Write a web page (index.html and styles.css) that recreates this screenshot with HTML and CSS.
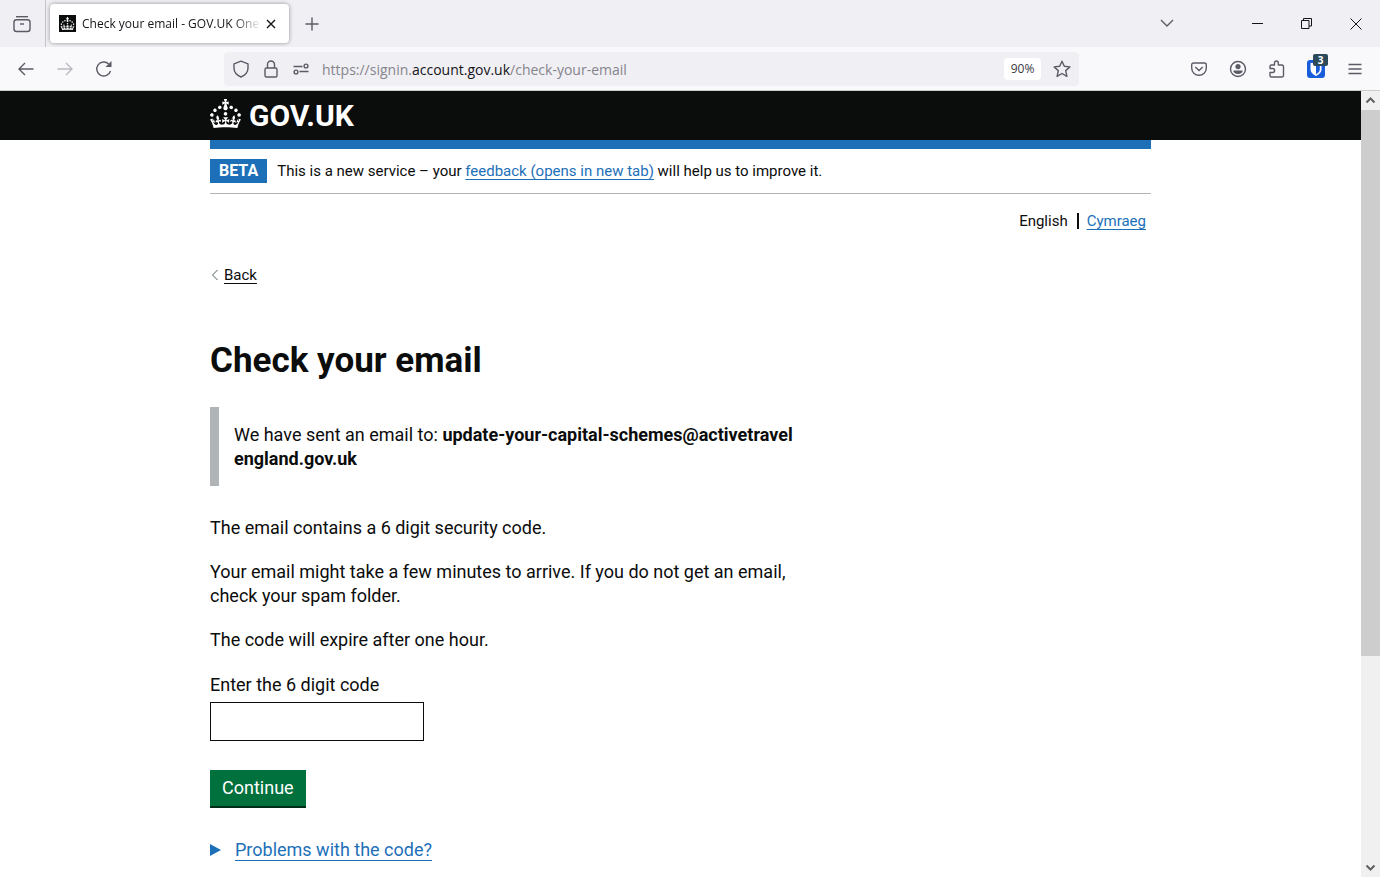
FILE: index.html
```html
<!DOCTYPE html>
<html lang="en">
<head>
<meta charset="utf-8">
<title>Check your email - GOV.UK One Login</title>
<link rel="stylesheet" href="styles.css">
</head>
<body>
<svg class="defs" aria-hidden="true">
  <symbol id="crown" viewBox="0 0 32 30"><path fill="#fff" d="M22.6 10.4c-1 .4-2-.1-2.4-1-.4-.9.1-2 1-2.4.9-.4 2 .1 2.4 1s-.1 2-1 2.4m-5.9 6.7c-.9.4-2-.1-2.4-1-.4-.9.1-2 1-2.4.9-.4 2 .1 2.4 1s-.1 2-1 2.4m10.8-3.7c-1 .4-2-.1-2.4-1-.4-.9.1-2 1-2.4.9-.4 2 .1 2.4 1s0 2-1 2.4m3.3 4.8c-1 .4-2-.1-2.4-1-.4-.9.1-2 1-2.4.9-.4 2 .1 2.4 1s-.1 2-1 2.4M17 4.7l2.3 1.2V2.5l-2.3.7-.2-.2.9-3h-3.4l.9 3-.2.2c-.1.1-2.3-.7-2.3-.7v3.4L15 4.7c.1.1.1.2.2.2l-1.3 4c-.1.2-.1.4-.1.6 0 1.1.8 2 1.9 2.2h.7c1-.2 1.9-1.1 1.9-2.1 0-.2 0-.4-.1-.6l-1.3-4c-.1-.2 0-.2.1-.3m-7.6 5.7c.9.4 2-.1 2.4-1 .4-.9-.1-2-1-2.4-.9-.4-2 .1-2.4 1s0 2 1 2.4m-5 3c.9.4 2-.1 2.4-1 .4-.9-.1-2-1-2.4-.9-.4-2 .1-2.4 1s.1 2 1 2.4m-3.2 4.8c.9.4 2-.1 2.4-1 .4-.9-.1-2-1-2.4-.9-.4-2 .1-2.4 1s0 2 1 2.4m14.8 11c4.4 0 8.6.3 12.3.8 1.1-4.5 2.4-7 3.7-8.8l-2.5-.9c.2 1.3.3 1.9 0 2.7-.4-.4-.8-1.1-1.1-2.3l-1.2 4c.7-.5 1.3-.8 2-.9-1.1 2.5-2.6 3.1-3.5 3-1.1-.2-1.7-1.2-1.5-2.1.3-1.2 1.5-1.5 2.1-.1 1.1-2.3-.8-3-2-2.3 1.9-1.9 2.1-3.5.6-5.6-2.1 1.6-2.1 3.2-1.2 5.5-1.2-1.4-3.2-.6-2.5 1.6.9-1.4 2.1-.5 1.9.8-.2 1.1-1.7 2.1-3.5 1.9-2.7-.2-2.9-2.1-2.9-3.6.7-.1 1.9.5 2.9 1.9l.4-4.3c-1.1 1.1-2.1 1.4-3.2 1.4.4-1.2 2.1-3 2.1-3h-5.4s1.7 1.9 2.1 3c-1.1 0-2.1-.2-3.2-1.4l.4 4.3c1-1.4 2.2-2 2.9-1.9-.1 1.5-.2 3.4-2.9 3.6-1.9.2-3.4-.8-3.5-1.9-.2-1.3 1-2.2 1.9-.8.7-2.3-1.2-3-2.5-1.6.9-2.2.9-3.9-1.2-5.5-1.5 2-1.3 3.7.6 5.6-1.2-.7-3.1 0-2 2.3.6-1.4 1.8-1.1 2.1.1.2.9-.3 1.9-1.5 2.1-.9.2-2.4-.5-3.5-3 .6 0 1.2.3 2 .9l-1.2-4c-.3 1.1-.7 1.9-1.1 2.3-.3-.8-.2-1.4 0-2.7l-2.9.9C1.3 23 2.6 25.5 3.7 30c3.7-.5 7.9-.8 12.3-.8"/></symbol>
</svg>

<div class="tabstrip">
  <button class="icon-btn history" aria-label="Recent browsing">
    <svg width="20" height="20" viewBox="0 0 20 20"><path d="M4 2.700h12"/><rect x="2" y="5.700" width="16" height="11.800" rx="2.500"/><path d="M8 10h4"/></svg>
  </button>
  <div class="tab">
    <svg class="favicon" width="17" height="17" viewBox="0 0 17 17"><rect width="17" height="17" fill="#0b0c0c"/><use href="#crown" x="1" y="2" width="15" height="13"/></svg>
    <span class="tab-title">Check your email - GOV.UK One</span>
    <button class="icon-btn close" aria-label="Close tab"><svg width="10" height="10" viewBox="0 0 10 10"><path d="M1 1l8 8M9 1l-8 8"/></svg></button>
  </div>
  <button class="icon-btn new-tab" aria-label="New tab"><svg width="14" height="14" viewBox="0 0 14 14"><path d="M7 .5v13M.5 7h13"/></svg></button>
  <div class="window-controls">
    <button class="icon-btn tabs-list" aria-label="List all tabs"><svg width="14" height="8" viewBox="0 0 14 8"><path d="M1 1l6 6 6-6"/></svg></button>
    <button class="icon-btn win" aria-label="Minimise"><svg width="11" height="11" viewBox="0 0 11 11"><path d="M0 5.500h11"/></svg></button>
    <button class="icon-btn win" aria-label="Restore"><svg width="11" height="11" viewBox="0 0 11 11"><path d="M.5 2.500h7.500v8H.5zM2.500 2.500V.5h8V8H8"/></svg></button>
    <button class="icon-btn win" aria-label="Close window"><svg width="12" height="12" viewBox="0 0 12 12"><path d="M.5.5l11 11M11.500.5l-11 11"/></svg></button>
  </div>
</div>

<div class="toolbar">
  <div class="nav">
    <button class="icon-btn" aria-label="Back"><svg width="16" height="14" viewBox="0 0 16 14"><path d="M15.500 7H1M7 1L1 7l6 6"/></svg></button>
    <button class="icon-btn" aria-label="Forward" disabled><svg width="16" height="14" viewBox="0 0 16 14"><path d="M.5 7H15M9 1l6 6-6 6"/></svg></button>
    <button class="icon-btn" aria-label="Reload"><svg width="18" height="18" viewBox="0 0 18 18"><path d="M15.500 11A7 7 0 1 1 13.700 4"/><path class="solid" d="M16.500 1v6h-6z"/></svg></button>
  </div>
  <div class="urlbar">
    <svg width="18" height="18" viewBox="0 0 18 18"><path d="M9 1.200l7 2.600v4.200c0 4-3 7.300-7 9-4-1.700-7-5-7-9V3.800z" stroke-linejoin="round"/></svg>
    <svg width="18" height="18" viewBox="0 0 18 18"><rect x="3" y="8" width="12" height="9" rx="1.500"/><path d="M5.500 8V4.500a3.500 3.500 0 0 1 7 0V8"/></svg>
    <svg width="18" height="18" viewBox="0 0 18 18"><path d="M1.500 6.500h9M7.500 11.500h9"/><circle cx="14" cy="6" r="1.900"/><circle cx="4" cy="12" r="1.900"/></svg>
    <span class="url">https://signin.<span class="domain">account.gov.uk</span>/check-your-email</span>
    <button class="zoom">90%</button>
    <button class="icon-btn star" aria-label="Bookmark this page"><svg width="18" height="18" viewBox="0 0 18 18"><path d="M9 1.200l2.300 5.100 5.600.6-4.200 3.700 1.200 5.800L9 13.500l-4.900 2.900 1.200-5.800L1.100 6.900l5.600-.6z" stroke-linejoin="round"/></svg></button>
  </div>
  <div class="tools">
    <button class="icon-btn" aria-label="Save to Pocket"><svg width="18" height="18" viewBox="0 0 18 18"><path d="M3.500 3h11a1.800 1.800 0 0 1 1.800 1.800V8a7.300 7.300 0 0 1-14.600 0V4.800A1.800 1.800 0 0 1 3.500 3z"/><path d="M5.300 7L9 10.500 12.700 7"/></svg></button>
    <button class="icon-btn" aria-label="Account"><svg width="18" height="18" viewBox="0 0 18 18"><circle cx="9" cy="9" r="7.500"/><circle class="solid" cx="9" cy="6.600" r="2.600"/><path class="solid" d="M4.300 10.500h9.400c0 2-2 3.500-4.700 3.500s-4.700-1.500-4.700-3.500z"/></svg></button>
    <button class="icon-btn" aria-label="Extensions"><svg width="18" height="18" viewBox="0 0 18 18"><path stroke-linejoin="round" d="M2 8V6.500A1.500 1.500 0 0 1 3.500 5H6.500V2.900a1.900 1.900 0 0 1 3.800 0V5h3.700A1.500 1.500 0 0 1 15.500 6.500v9a1.500 1.500 0 0 1-1.500 1.500H3.500A1.500 1.500 0 0 1 2 15.500V12.500h2.600a2 2 0 0 0 0-4H2z"/></svg></button>
    <button class="icon-btn vault" aria-label="Password manager"><svg width="18" height="18" viewBox="0 0 18 18"><rect width="18" height="18" rx="3" fill="#175ddc" stroke="none"/><path d="M3.500 3h11v6.500c0 3-2.500 5-5.500 6.500-3-1.500-5.500-3.500-5.500-6.500z" fill="#fff" stroke="none"/><path d="M9 4.500h3.800v5c0 2-1.700 3.500-3.800 4.700z" fill="#175ddc" stroke="none"/></svg><span class="badge">3</span></button>
    <button class="icon-btn" aria-label="Menu"><svg width="18" height="18" viewBox="0 0 18 18"><path d="M2.500 4.500h13M2.500 9h13M2.500 13.500h13"/></svg></button>
  </div>
</div>

<div class="viewport">
  <div class="page">
    <header class="header">
      <div class="container">
        <a class="logo" href="#"><svg width="31" height="29" aria-hidden="true"><use href="#crown"/></svg><span>GOV.UK</span></a>
      </div>
    </header>
    <div class="container">
      <div class="phase">
        <strong class="tag">BETA</strong>
        <span>This is a new service – your <a href="#">feedback (opens in new tab)</a> will help us to improve it.</span>
      </div>
      <nav class="lang" aria-label="Language"><span class="current">English</span><a href="#">Cymraeg</a></nav>
      <a class="back" href="#"><svg width="8" height="12" viewBox="0 0 8 12"><path d="M6.500 1L1.500 6l5 5"/></svg><span>Back</span></a>
      <main class="main">
        <h1>Check your email</h1>
        <div class="inset">We have sent an email to: <strong>update-your-capital-schemes@activetravel<wbr>england.gov.uk</strong></div>
        <p>The email contains a 6 digit security code.</p>
        <p>Your email might take a few minutes to arrive. If you do not get an email, check your spam folder.</p>
        <p>The code will expire after one hour.</p>
        <form>
          <label for="code">Enter the 6 digit code</label>
          <input id="code" class="code" type="text" inputmode="numeric">
          <button class="continue" type="button">Continue</button>
        </form>
        <details><summary><svg width="11" height="12" viewBox="0 0 11 12"><path d="M0 0l11 6-11 6z" fill="#1d70b8"/></svg><span>Problems with the code?</span></summary></details>
      </main>
    </div>
  </div>
  <div class="scrollbar" aria-hidden="true">
    <svg width="19" height="19" viewBox="0 0 19 19"><path d="M5.500 11.500l4-4 4 4"/></svg>
    <div class="track"><div class="thumb"></div></div>
    <svg width="19" height="19" viewBox="0 0 19 19"><path d="M5.500 7.500l4 4 4-4"/></svg>
  </div>
</div>
</body>
</html>
```
FILE: styles.css
```css
* { box-sizing: border-box; }
body {
  margin: 0;
  height: 100vh;
  display: flex;
  flex-direction: column;
  overflow: hidden;
  background: #fff;
  color: #0b0c0c;
  font-family: Roboto, "Liberation Sans", sans-serif;
}
button { font: inherit; margin: 0; padding: 0; border: 0; background: none; }
svg { display: block; flex: none; }
.defs { position: absolute; width: 0; height: 0; }

/* Browser chrome */
.tabstrip, .toolbar {
  flex: none;
  display: flex;
  align-items: center;
  font-family: "Open Sans", "Noto Sans", sans-serif;
  font-size: 12px;
  color: #15141a;
}
.tabstrip svg, .toolbar svg { fill: none; stroke: #5b5b66; stroke-width: 1.4; }
.tabstrip svg.favicon { stroke: none; }
.toolbar .solid { fill: #5b5b66; stroke: none; }
.icon-btn { display: flex; align-items: center; justify-content: center; }
.tabstrip { height: 47px; background: #f0eff4; }
.history { width: 46px; height: 47px; padding-right: 2px; border-right: 1px solid #c4c4cc; }
.tab {
  display: flex;
  align-items: center;
  width: 239px;
  height: 39px;
  margin-left: 4px;
  padding: 0 8px 0 9px;
  background: #fff;
  border-radius: 4px;
  box-shadow: 0 0 4px rgba(0, 0, 0, .4);
}
.tab-title {
  flex: 1;
  margin-left: 6px;
  white-space: nowrap;
  mask-image: linear-gradient(to left, transparent, #000 28px);
}
.close { width: 20px; height: 20px; }
.tabstrip .close svg { stroke: #15141a; }
.new-tab { width: 46px; height: 40px; }
.window-controls { display: flex; margin-left: auto; }
.tabs-list { width: 40px; height: 44px; margin-right: 46px; }
.win { width: 49px; height: 46px; }
.tabstrip .win svg { stroke: #15141a; stroke-width: 1; }

.toolbar { height: 44px; background: #f9f9fb; border-bottom: 1px solid #cccccf; }
.nav { display: flex; padding-left: 6px; }
.nav .icon-btn { width: 39px; height: 40px; }
.nav .icon-btn:disabled { opacity: .4; }
.urlbar {
  flex: 1;
  display: flex;
  align-items: center;
  gap: 12px;
  height: 34px;
  margin-left: 101px;
  padding: 0 8px;
  background: #f0eff4;
  border-radius: 4px;
}
.url { flex: 1; padding-top: 2px; font-size: 14px; color: #85848c; white-space: nowrap; }
.domain { color: #15141a; }
.zoom { width: 37px; height: 22px; background: #fff; border-radius: 4px; color: #3a3944; }
.tools { display: flex; margin-left: 100px; padding-right: 6px; }
.tools .icon-btn { width: 39px; height: 40px; }
.vault { position: relative; }
.badge {
  position: absolute;
  top: 5px;
  right: 7px;
  width: 15px;
  height: 12px;
  border-radius: 2px;
  background: #2c4a5a;
  color: #fff;
  font-size: 10px;
  font-weight: 700;
  line-height: 12px;
  text-align: center;
}

/* Page area */
.viewport { flex: 1; min-height: 0; display: flex; }
.page { flex: 1; min-width: 0; overflow: hidden; }
.container { max-width: 941px; margin: 0 auto; }
.page a { color: #1d70b8; text-decoration: underline; text-decoration-thickness: 1px; text-underline-offset: 3px; }
.header { background: linear-gradient(#0b0c0c 49px, transparent 49px); }
.header .container { height: 58px; border-bottom: 9px solid #1d70b8; }
.page .logo { display: flex; align-items: center; gap: 8px; height: 45px; color: #fff; text-decoration: none; font-size: 30px; font-weight: 700; }
.logo span { padding-top: 4px; }
.phase { display: flex; align-items: center; gap: 10px; height: 45px; border-bottom: 1px solid #b1b4b6; font-size: 15px; }
.tag { padding: 0 9px; background: #1d70b8; color: #fff; font-size: 16px; line-height: 24px; }
.lang { display: flex; align-items: center; justify-content: flex-end; padding: 18px 5px 0 0; font-size: 15px; line-height: 18px; }
.current { padding-right: 9px; margin-right: 8px; border-right: 2px solid #0b0c0c; line-height: 16px; }
.page .back { display: flex; align-items: center; gap: 5px; width: max-content; margin-top: 34px; padding-left: 1px; color: #0b0c0c; font-size: 15px; line-height: 22px; text-decoration: none; }
.back span { text-decoration: underline; text-underline-offset: 3px; }
.back svg { fill: none; stroke: #505a5f; }
.main { max-width: 614px; margin-top: 52px; font-size: 18px; line-height: 24px; }
h1 { margin: 0 0 24px; font-size: 35px; line-height: 45px; }
.inset { margin-bottom: 30px; padding: 16px 0 15px 15px; border-left: 9px solid #b1b4b6; }
p { margin: 0 0 20px; }
form { margin-top: 21px; }
label { display: block; margin-bottom: 5px; }
.code { display: block; width: 214px; height: 39px; margin-bottom: 29px; padding: 4px; border: 1px solid #0b0c0c; font: inherit; }
.continue { display: block; height: 38px; padding: 0 12px; background: #00703c; border-bottom: 2px solid #002d18; color: #fff; }
details { margin-top: 30px; }
summary { display: flex; align-items: center; gap: 14px; width: max-content; color: #1d70b8; list-style: none; }
summary span { text-decoration: underline; text-decoration-thickness: 1px; text-underline-offset: 4px; }

.scrollbar { flex: none; display: flex; flex-direction: column; width: 19px; background: #f0f0f0; }
.scrollbar svg { fill: none; stroke: #606060; stroke-width: 2; }
.track { flex: 1; }
.thumb { height: 73%; background: #cdcdcd; }
```
